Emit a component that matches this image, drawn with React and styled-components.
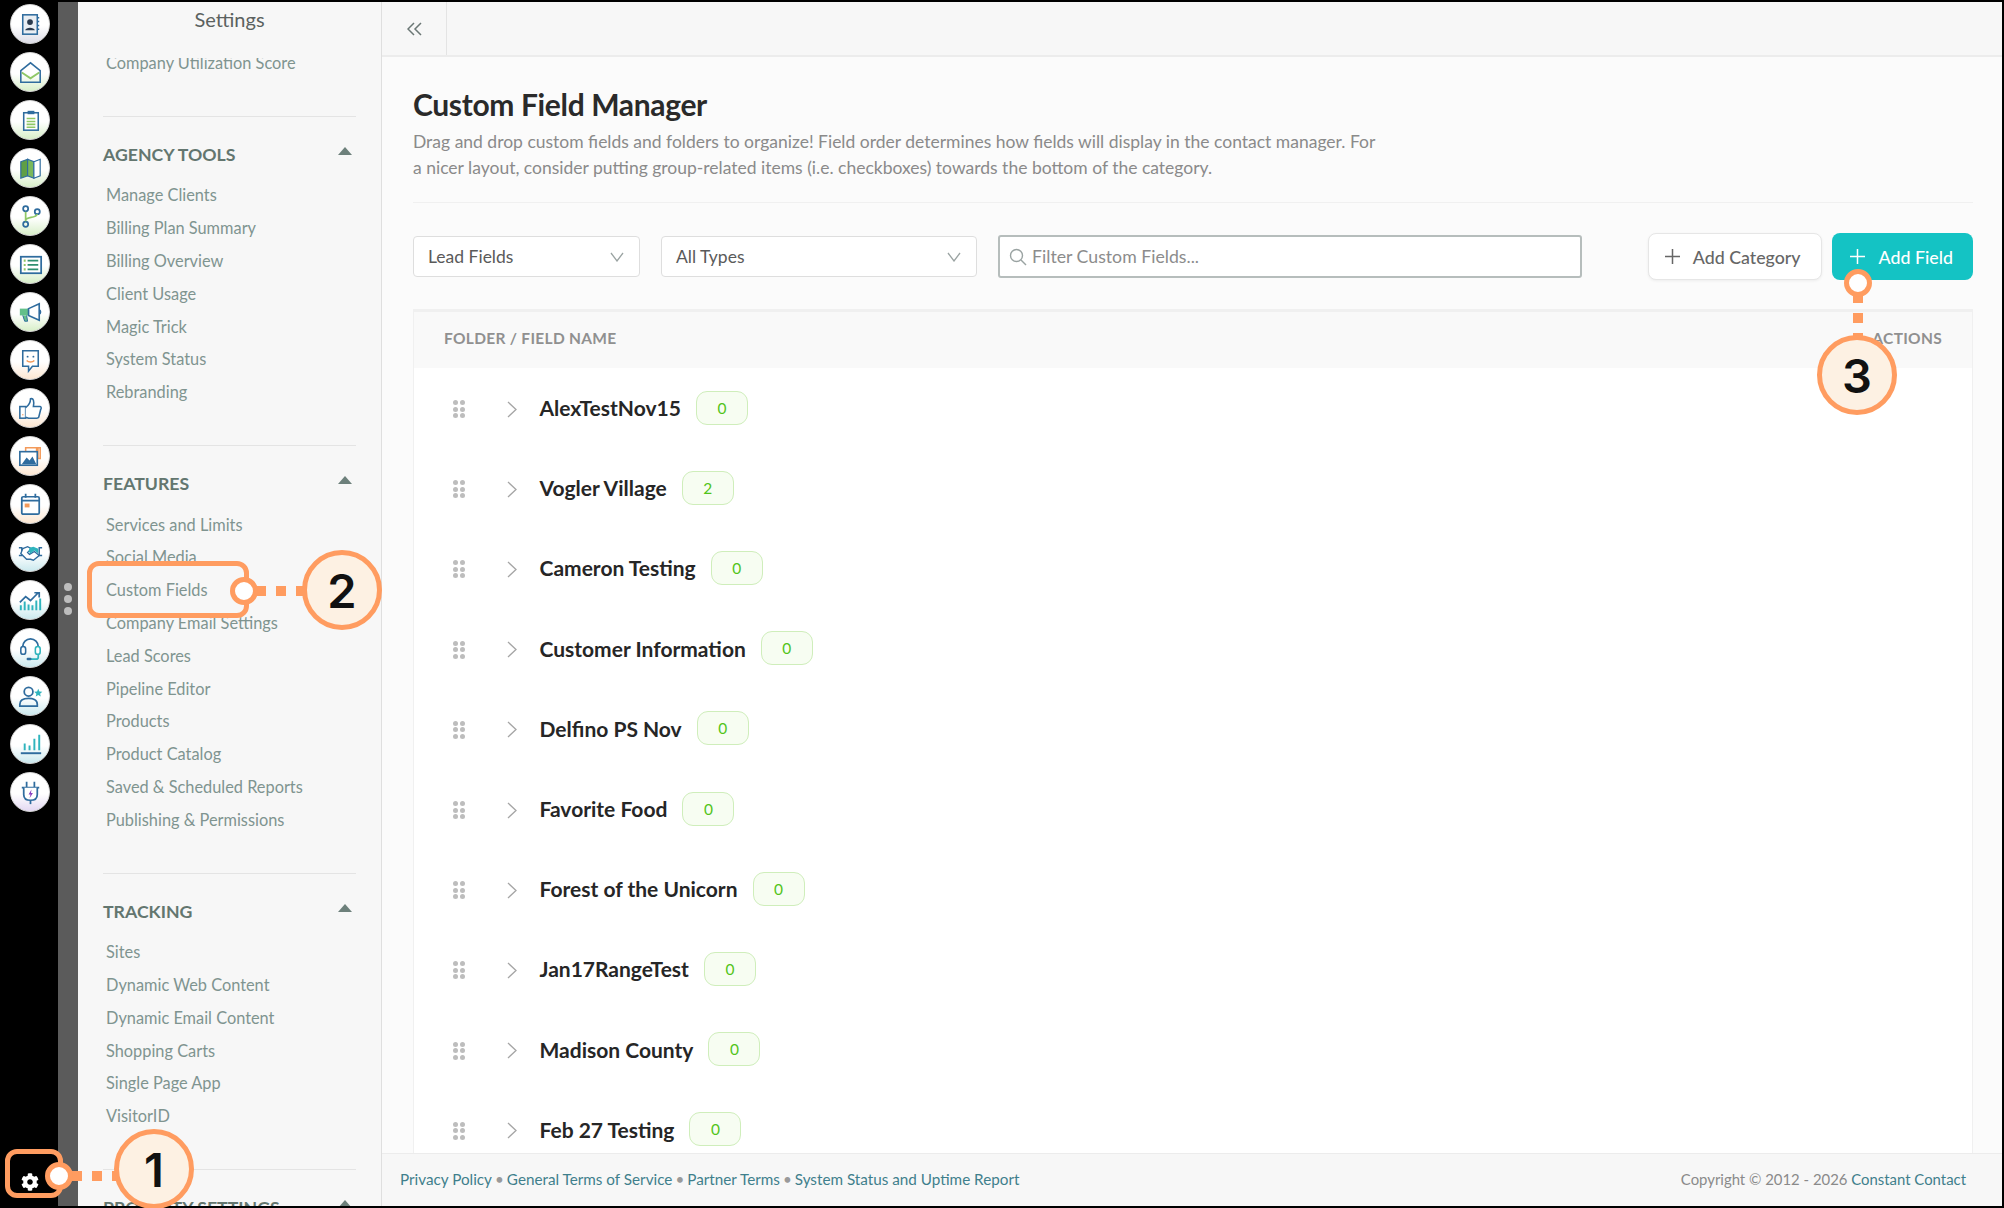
import React from "react";
import styled, { createGlobalStyle } from "styled-components";
import { FaCog } from "react-icons/fa";

const BLUE = "#2f6c9e";
const GREEN = "#8fc866";
const ORANGE = "#f39a5a";
const TEAL = "#2fb4bd";
const ANNOTATION = "#ff9c60";

const railIcons = [
  {
    tint: "#dcdce6",
    draw: (
      <>
        <rect x="8" y="6" width="15" height="20" fill="#e9eef3" stroke={BLUE} strokeWidth="1.6" />
        <circle cx="15.5" cy="13.5" r="3" fill="#2b3a4d" />
        <path d="M10.5 22c.5-3.5 9.5-3.5 10 0z" fill="#2b3a4d" />
        <path d="M23 9h2M23 13h2M23 17h2M23 21h2" stroke={BLUE} strokeWidth="1.6" />
      </>
    ),
  },
  {
    tint: "#d8efc9",
    draw: (
      <>
        <path d="M6 14 16 6l10 8v12H6z" fill="none" stroke={BLUE} strokeWidth="1.6" />
        <path d="M7 16l9 6 9-6" fill="none" stroke={GREEN} strokeWidth="2" />
      </>
    ),
  },
  {
    tint: "#d8efc9",
    draw: (
      <>
        <rect x="9" y="8" width="15" height="18" fill="#fff" stroke={BLUE} strokeWidth="1.6" />
        <rect x="13" y="6" width="7" height="3.5" fill={BLUE} />
        <path d="M12 14h9M12 17h9M12 20h9M12 23h9" stroke={GREEN} strokeWidth="1.6" />
      </>
    ),
  },
  {
    tint: "#d8efc9",
    draw: (
      <>
        <path d="M6 9l7-2.5v17L6 26z" fill="#5f9f45" stroke={BLUE} strokeWidth="1.2" />
        <path d="M13 6.500l6.500 2.500v17L13 23.500z" fill="#7ab85a" stroke={BLUE} strokeWidth="1.2" />
        <path d="M19.500 9l6.500-2.500v17L19.500 26z" fill="#fff" stroke={BLUE} strokeWidth="1.2" />
      </>
    ),
  },
  {
    tint: "#d8efc9",
    draw: (
      <>
        <circle cx="11" cy="8" r="2.600" fill="none" stroke={BLUE} strokeWidth="1.8" />
        <circle cx="11" cy="24" r="2.600" fill="none" stroke={BLUE} strokeWidth="1.8" />
        <circle cx="23" cy="11" r="2.600" fill="none" stroke={BLUE} strokeWidth="1.8" />
        <path d="M11 11v10M11 20c0-4 11-2 12-6.500" fill="none" stroke={GREEN} strokeWidth="1.8" />
      </>
    ),
  },
  {
    tint: "#d8efc9",
    draw: (
      <>
        <rect x="6" y="8" width="21" height="17" fill="#fff" stroke={BLUE} strokeWidth="1.8" />
        <path d="M9 12h2M9 16.500h2M9 21h2" stroke={GREEN} strokeWidth="2.200" />
        <path d="M13 12h11M13 16.500h11M13 21h11" stroke="#2f8f6f" strokeWidth="1.800" />
      </>
    ),
  },
  {
    tint: "#d8efc9",
    draw: (
      <>
        <rect x="5" y="12" width="9" height="7" fill="#63c08a" />
        <path d="M8 19l2 6h3l-1-6" fill="#63c08a" stroke={BLUE} strokeWidth="1" />
        <path d="M14 12l11-5v17l-11-5z" fill="#fff" stroke={BLUE} strokeWidth="1.700" />
        <path d="M25 13c2 1 2 4 0 5" fill="none" stroke={BLUE} strokeWidth="1.400" />
      </>
    ),
  },
  {
    tint: "#fde7d2",
    draw: (
      <>
        <path d="M8 6h16v16h-6l-4 5v-5H8z" fill="#fff" stroke={BLUE} strokeWidth="1.600" />
        <circle cx="13" cy="12" r="1" fill={BLUE} />
        <circle cx="19" cy="12" r="1" fill={BLUE} />
        <path d="M12 16c2 2 6 2 8 0" fill="none" stroke={ORANGE} strokeWidth="1.500" />
      </>
    ),
  },
  {
    tint: "#fde7d2",
    draw: (
      <>
        <rect x="5" y="14" width="6" height="12" fill="#fff" stroke={BLUE} strokeWidth="1.600" />
        <path d="M8 22v1" stroke={ORANGE} strokeWidth="1.600" />
        <path d="M11 15c3-2 5-5 5-9 3-1 4 2 3 8h7c1 0 1.500 2 .5 3l-2 8c-.5 1-1 1-2 1H14l-3-1" fill="#fff" stroke={BLUE} strokeWidth="1.600" />
      </>
    ),
  },
  {
    tint: "#fde7d2",
    draw: (
      <>
        <path d="M11 11V7h15v11h-3" fill="#fff" stroke={ORANGE} strokeWidth="1.600" />
        <path d="M23 7v11" stroke={ORANGE} strokeWidth="3" />
        <rect x="5" y="11" width="18" height="14" fill="#fff" stroke={BLUE} strokeWidth="1.700" />
        <path d="M7 24l5-7 3 3 3-4 4 8z" fill={BLUE} />
      </>
    ),
  },
  {
    tint: "#fde7d2",
    draw: (
      <>
        <rect x="7" y="8" width="18" height="18" rx="1.500" fill="#fff" stroke={BLUE} strokeWidth="1.800" />
        <path d="M7 12h18M11 5v4M21 5v4" stroke={BLUE} strokeWidth="1.800" />
        <rect x="10" y="15" width="5" height="4" fill={ORANGE} />
      </>
    ),
  },
  {
    tint: "#cbe9ee",
    draw: (
      <>
        <path d="M4 11h3v8H4M28 11h-3v8h3" fill="none" stroke={BLUE} strokeWidth="1.500" />
        <path d="M8 12l5-2 4 2-4 4 2 2 5-3 5 4-6 5-3-1-4 0-6-6z" fill="#fff" stroke={BLUE} strokeWidth="1.400" />
        <path d="M15 11l4-1 5 2v5l-4-3-4 3-2-2z" fill={TEAL} />
      </>
    ),
  },
  {
    tint: "#cbe9ee",
    draw: (
      <>
        <path d="M5 18l6-6 5 4 8-8M20 8h5v5" fill="none" stroke={BLUE} strokeWidth="1.800" />
        <path d="M6 21v5M10 17v9M14 20v6M18 21v5M22 16v10M26 14v12" stroke={TEAL} strokeWidth="2" />
      </>
    ),
  },
  {
    tint: "#cbe9ee",
    draw: (
      <>
        <path d="M8 18v-4a8 8 0 0 1 16 0v4" fill="none" stroke={BLUE} strokeWidth="1.800" />
        <rect x="6" y="14" width="5" height="8" rx="2.500" fill="#fff" stroke={BLUE} strokeWidth="1.600" />
        <rect x="21" y="14" width="5" height="8" rx="2.500" fill="#fff" stroke={TEAL} strokeWidth="1.600" />
        <path d="M24 22v3c0 1-1 2-2 2h-6" fill="none" stroke={TEAL} strokeWidth="1.800" />
        <rect x="12" y="25.500" width="5" height="2.500" rx="1" fill={BLUE} />
      </>
    ),
  },
  {
    tint: "#cbe9ee",
    draw: (
      <>
        <circle cx="14" cy="11" r="4.500" fill="none" stroke={BLUE} strokeWidth="1.800" />
        <path d="M5 26v-2c0-5 5-6 9-6s9 1 9 6v2z" fill="none" stroke={BLUE} strokeWidth="1.800" />
        <path d="M24 8l1.200 2.800 3 .3-2.300 2 .7 3-2.600-1.600-2.600 1.600.7-3-2.300-2 3-.3z" fill={TEAL} />
      </>
    ),
  },
  {
    tint: "#cbe9ee",
    draw: (
      <>
        <path d="M10 15v7M15 17v5M20 10v12M25 6v16" stroke={TEAL} strokeWidth="2" />
        <path d="M6 25h21" stroke={BLUE} strokeWidth="2" />
      </>
    ),
  },
  {
    tint: "#e3d8f2",
    draw: (
      <>
        <path d="M12 5v6M20 5v6M7 11h18" stroke={BLUE} strokeWidth="1.800" />
        <path d="M9 11v7c0 4 3 6 7 6s7-2 7-6v-7" fill="#fff" stroke={BLUE} strokeWidth="1.800" />
        <path d="M16 24v4" stroke={BLUE} strokeWidth="1.800" />
        <path d="M17 13l-3 5h2l-1 4 3.500-5.500h-2z" fill="#8a3fc0" />
      </>
    ),
  },
];

const sections = [
  {
    title: "AGENCY TOOLS",
    items: ["Manage Clients", "Billing Plan Summary", "Billing Overview", "Client Usage", "Magic Trick", "System Status", "Rebranding"],
  },
  {
    title: "FEATURES",
    items: [
      "Services and Limits",
      "Social Media",
      "Custom Fields",
      "Company Email Settings",
      "Lead Scores",
      "Pipeline Editor",
      "Products",
      "Product Catalog",
      "Saved & Scheduled Reports",
      "Publishing & Permissions",
    ],
  },
  {
    title: "TRACKING",
    items: ["Sites", "Dynamic Web Content", "Dynamic Email Content", "Shopping Carts", "Single Page App", "VisitorID"],
  },
  { title: "PROPERTY SETTINGS", items: [] },
];

const folders = [
  ["AlexTestNov15", 0],
  ["Vogler Village", 2],
  ["Cameron Testing", 0],
  ["Customer Information", 0],
  ["Delfino PS Nov", 0],
  ["Favorite Food", 0],
  ["Forest of the Unicorn", 0],
  ["Jan17RangeTest", 0],
  ["Madison County", 0],
  ["Feb 27 Testing", 0],
];

const GlobalStyle = createGlobalStyle`
  html, body {
    margin: 0;
    background: #000;
    overflow: hidden;
  }
  * {
    box-sizing: border-box;
  }
`;

const Frame = styled.div`
  position: relative;
  display: flex;
  width: 2004px;
  height: 1208px;
  padding: 2px 2px 2px 0;
  background: #000;
  font-family: Lato, "Open Sans", sans-serif;
  overflow: hidden;
`;

const Rail = styled.nav`
  flex: 0 0 58px;
  display: flex;
  flex-direction: column;
  align-items: center;
  gap: 8px;
  padding: 2px 0 0 2px;
  background: #000;
`;

const RailButton = styled.div`
  flex: none;
  display: flex;
  align-items: center;
  justify-content: center;
  width: 40px;
  height: 40px;
  border-radius: 50%;
  background: linear-gradient(180deg, #fff 55%, ${(p) => p.$tint} 100%);
  border: 1px solid #d8d8d8;
`;

const GearButton = styled.div`
  margin-top: auto;
  margin-bottom: 15px;
  display: flex;
  color: #fff;
`;

const Handle = styled.div`
  flex: 0 0 20px;
  display: flex;
  flex-direction: column;
  align-items: center;
  justify-content: center;
  gap: 4px;
  padding-bottom: 11px;
  background: #5b5b5b;
  span {
    width: 8px;
    height: 8px;
    border-radius: 50%;
    background: #bdbdbd;
  }
`;

const Sidebar = styled.aside`
  flex: 0 0 304px;
  display: flex;
  flex-direction: column;
  background: #f7f7f7;
  border-right: 1px solid #dfdfdf;
`;

const SidebarTitle = styled.div`
  flex: 0 0 56px;
  padding-top: 3px;
  text-align: center;
  font-size: 20px;
  line-height: 28px;
  color: #5b6260;
`;

const SidebarScroll = styled.div`
  flex: 1;
  min-height: 0;
  overflow: hidden;
`;

const SidebarInner = styled.div`
  margin-top: -12px;
  padding: 0 25px;
`;

const ScrolledItem = styled.div`
  height: 32.8px;
  line-height: 34.8px;
  padding-left: 3px;
  margin-bottom: 37px;
  font-size: 16.35px;
  color: #7f9490;
  white-space: nowrap;
`;

const Section = styled.section`
  border-top: 1px solid #e4e4e4;
  padding: 23px 0 36px;
`;

const SectionHead = styled.div`
  display: flex;
  align-items: center;
  justify-content: space-between;
  height: 30px;
  margin-bottom: 9.600px;
  padding-right: 4px;
  font-size: 17.7px;
  font-weight: 700;
  color: #63766f;
`;

const Caret = styled.span`
  width: 0;
  height: 0;
  margin-top: -7px;
  border-left: 7px solid transparent;
  border-right: 7px solid transparent;
  border-bottom: 8px solid #6d807b;
`;

const SideLink = styled.a`
  display: block;
  height: 32.800px;
  line-height: 32.800px;
  padding-left: 3px;
  font-size: 16.35px;
  color: #7f9490;
  white-space: nowrap;
`;

const Main = styled.main`
  flex: 1;
  min-width: 0;
  display: flex;
  flex-direction: column;
  background: #fbfbfb;
`;

const TopBar = styled.header`
  flex: 0 0 55px;
  display: flex;
  background: #f7f7f7;
  border-bottom: 2px solid #ececec;
`;

const CollapseButton = styled.div`
  width: 65px;
  display: flex;
  align-items: center;
  justify-content: center;
  color: #6b7775;
  border-right: 1px solid #e4e4e4;
`;

const Content = styled.div`
  flex: 1;
  min-height: 0;
  overflow: hidden;
  padding: 29px 29px 0 31px;
`;

const PageTitle = styled.h1`
  margin: 0;
  font-size: 30px;
  line-height: 36px;
  font-weight: 700;
  letter-spacing: -0.35px;
  color: #2a2a2a;
`;

const Description = styled.p`
  width: 970px;
  margin: 7px 0 21px;
  font-size: 17.5px;
  line-height: 26px;
  color: #8a8a8a;
`;

const Rule = styled.hr`
  margin: 0;
  border: 0;
  border-top: 1px solid #f0f0f0;
`;

const Toolbar = styled.div`
  display: flex;
  align-items: center;
  height: 47px;
  margin: 30px 0 29px;
`;

const Select = styled.div`
  display: flex;
  align-items: center;
  justify-content: space-between;
  width: ${(p) => p.$width}px;
  height: 41px;
  margin-right: 21px;
  padding: 0 15px 0 14px;
  background: #fff;
  border: 1px solid #dedede;
  border-radius: 4px;
  font-size: 17.500px;
  color: #5a5a5a;
`;

const SearchBox = styled.div`
  display: flex;
  align-items: center;
  gap: 5px;
  width: 584px;
  height: 43px;
  padding: 0 9px;
  background: #fff;
  border: 2px solid #b6bdbc;
  border-radius: 3px;
  font-size: 17.7px;
  color: #8c8c8c;
`;

const ActionButton = styled.button`
  display: flex;
  align-items: center;
  gap: ${(p) => (p.$primary ? 14 : 13)}px;
  height: 47px;
  padding: 0 ${(p) => (p.$primary ? 20 : 20)}px 0 ${(p) => (p.$primary ? 18 : 16)}px;
  margin-left: ${(p) => (p.$primary ? "10px" : "auto")};
  font-family: inherit;
  font-size: 17.8px;
  font-weight: 500;
  color: ${(p) => (p.$primary ? "#fff" : "#666")};
  background: ${(p) => (p.$primary ? "#14c3c4" : "#fff")};
  border: ${(p) => (p.$primary ? "0" : "1px solid #e6e6e6")};
  border-radius: 8px;
  box-shadow: ${(p) => (p.$primary ? "none" : "0 1px 3px rgba(0, 0, 0, 0.06)")};
`;

const Table = styled.div`
  background: #fff;
  border: 1px solid #f0f0f0;
  border-width: 3px 1px 0;
`;

const TableHead = styled.div`
  display: flex;
  align-items: center;
  justify-content: space-between;
  height: 55.5px;
  padding: 0 30px 3px;
  background: #f9f9f9;
  font-size: 15.5px;
  font-weight: 700;
  letter-spacing: 0.3px;
  color: #909090;
`;

const Row = styled.div`
  display: flex;
  align-items: center;
  height: 80.200px;
  padding-left: 39px;
  > svg {
    margin-top: 3px;
  }
`;

const DragHandle = styled.div`
  display: grid;
  grid-template-columns: 5px 5px;
  gap: 1.500px;
  margin: 3px 42px 0 0;
  span {
    width: 5px;
    height: 5px;
    border-radius: 50%;
    background: #bdbdbd;
  }
`;

const FolderName = styled.span`
  margin-left: 23px;
  font-size: 21px;
  font-weight: 700;
  color: #262626;
`;

const CountBadge = styled.span`
  display: flex;
  align-items: center;
  justify-content: center;
  width: 52px;
  height: 34px;
  margin-left: 15px;
  background: #f7fdf2;
  border: 1px solid #cfeebb;
  border-radius: 11px;
  font-size: 15.5px;
  color: #52c41a;
`;

const Footer = styled.footer`
  flex: 0 0 53px;
  display: flex;
  align-items: center;
  justify-content: space-between;
  padding: 0 36px 3px 18px;
  background: #f7f7f7;
  border-top: 1px solid #ececec;
  font-size: 15.25px;
  color: #8a8a8a;
`;

const FooterLink = styled.a`
  color: #3f7f8c;
`;

const Bullet = styled.span`
  margin: 0 3px;
  color: #9a9a9a;
`;

const Copyright = styled.span`
  font-size: 14.9px;
`;

const CalloutBox = styled.div`
  position: absolute;
  left: ${(p) => p.$x}px;
  top: ${(p) => p.$y}px;
  width: ${(p) => p.$w}px;
  height: ${(p) => p.$h}px;
  border: 5px solid ${ANNOTATION};
  border-radius: 12px;
`;

const CalloutDot = styled.div`
  position: absolute;
  left: ${(p) => p.$x - 14}px;
  top: ${(p) => p.$y - 14}px;
  width: 28px;
  height: 28px;
  background: #fff;
  border: 5px solid ${ANNOTATION};
  border-radius: 50%;
`;

const CalloutNumber = styled.div`
  position: absolute;
  left: ${(p) => p.$x - 40}px;
  top: ${(p) => p.$y - 40}px;
  display: flex;
  align-items: center;
  justify-content: center;
  width: 80px;
  height: 80px;
  background: #fdf1e3;
  border: 5px solid ${ANNOTATION};
  border-radius: 50%;
  font-family: Inter, sans-serif;
  font-size: 47px;
  font-weight: 600;
  color: #111;
`;

const Connector = styled.div`
  position: absolute;
  left: ${(p) => p.$x}px;
  top: ${(p) => p.$y}px;
  display: flex;
  flex-direction: ${(p) => (p.$vertical ? "column" : "row")};
  gap: 10px;
  span {
    width: 10px;
    height: 10px;
    background: ${ANNOTATION};
  }
`;

const Chevron = ({ direction = "down", color = "#9aa3a2", width = 14, height = 10 }) => (
  <svg width={width} height={height} viewBox={`0 0 ${width} ${height}`} fill="none" stroke={color} strokeWidth="1.300">
    {direction === "down" ? (
      <polyline points={`1,1 ${width / 2},${height - 1} ${width - 1},1`} />
    ) : (
      <polyline points={`1,1 ${width - 1},${height / 2} 1,${height - 1}`} />
    )}
  </svg>
);

const PlusIcon = ({ color }) => (
  <svg width="15" height="15" viewBox="0 0 15 15" stroke={color} strokeWidth="1.500">
    <path d="M7.500 0v15M0 7.500h15" />
  </svg>
);

const Callout = ({ number, box, dot, connector, at }) => (
  <>
    {box && <CalloutBox $x={box[0]} $y={box[1]} $w={box[2]} $h={box[3]} />}
    <Connector $x={connector.x} $y={connector.y} $vertical={connector.vertical}>
      <span />
      <span />
      <span />
    </Connector>
    <CalloutDot $x={dot[0]} $y={dot[1]} />
    <CalloutNumber $x={at[0]} $y={at[1]}>
      {number}
    </CalloutNumber>
  </>
);

export default function App() {
  return (
    <Frame>
      <GlobalStyle />
      <Rail>
        {railIcons.map((icon, index) => (
          <RailButton key={index} $tint={icon.tint}>
            <svg width="31" height="31" viewBox="0 0 32 32">
              {icon.draw}
            </svg>
          </RailButton>
        ))}
        <GearButton>
          <FaCog size={18} />
        </GearButton>
      </Rail>
      <Handle>
        <span />
        <span />
        <span />
      </Handle>
      <Sidebar>
        <SidebarTitle>Settings</SidebarTitle>
        <SidebarScroll>
          <SidebarInner>
            <ScrolledItem>Company Utilization Score</ScrolledItem>
            {sections.map((section) => (
              <Section key={section.title}>
                <SectionHead>
                  {section.title}
                  <Caret />
                </SectionHead>
                {section.items.map((item) => (
                  <SideLink key={item}>{item}</SideLink>
                ))}
              </Section>
            ))}
          </SidebarInner>
        </SidebarScroll>
      </Sidebar>
      <Main>
        <TopBar>
          <CollapseButton>
            <svg width="15" height="14" viewBox="0 0 15 14" fill="none" stroke="#6b7775" strokeWidth="1.500">
              <polyline points="7,1 1,7 7,13" />
              <polyline points="14,1 8,7 14,13" />
            </svg>
          </CollapseButton>
        </TopBar>
        <Content>
          <PageTitle>Custom Field Manager</PageTitle>
          <Description>
            Drag and drop custom fields and folders to organize! Field order determines how fields will display in the contact manager. For a nicer layout, consider putting group-related items (i.e. checkboxes) towards the bottom of the category.
          </Description>
          <Rule />
          <Toolbar>
            <Select $width={227}>
              Lead Fields
              <Chevron />
            </Select>
            <Select $width={316}>
              All Types
              <Chevron />
            </Select>
            <SearchBox>
              <svg width="18" height="18" viewBox="0 0 18 18" fill="none" stroke="#9aa3a2" strokeWidth="1.400">
                <circle cx="7.500" cy="7.500" r="6" />
                <path d="M12 12l5 5" />
              </svg>
              Filter Custom Fields...
            </SearchBox>
            <ActionButton>
              <PlusIcon color="#666" />
              Add Category
            </ActionButton>
            <ActionButton $primary>
              <PlusIcon color="#fff" />
              Add Field
            </ActionButton>
          </Toolbar>
          <Table>
            <TableHead>
              <span>FOLDER / FIELD NAME</span>
              <span>ACTIONS</span>
            </TableHead>
            {folders.map(([name, count]) => (
              <Row key={name}>
                <DragHandle>
                  {[0, 1, 2, 3, 4, 5].map((dot) => (
                    <span key={dot} />
                  ))}
                </DragHandle>
                <Chevron direction="right" color="#a5a5a5" width={10} height={17} />
                <FolderName>{name}</FolderName>
                <CountBadge>{count}</CountBadge>
              </Row>
            ))}
          </Table>
        </Content>
        <Footer>
          <span>
            <FooterLink>Privacy Policy</FooterLink>
            <Bullet>•</Bullet>
            <FooterLink>General Terms of Service</FooterLink>
            <Bullet>•</Bullet>
            <FooterLink>Partner Terms</FooterLink>
            <Bullet>•</Bullet>
            <FooterLink>System Status and Uptime Report</FooterLink>
          </span>
          <Copyright>
            Copyright © 2012 - 2026 <FooterLink>Constant Contact</FooterLink>
          </Copyright>
        </Footer>
      </Main>
      <Callout number="1" box={[5, 1149, 58, 49]} dot={[59, 1176]} connector={{ x: 72, y: 1171 }} at={[154, 1169]} />
      <Callout number="2" box={[87, 561, 162, 57]} dot={[244, 591]} connector={{ x: 256, y: 586 }} at={[342, 590]} />
      <Callout number="3" dot={[1858, 283]} connector={{ x: 1853, y: 293, vertical: true }} at={[1857, 375]} />
    </Frame>
  );
}
